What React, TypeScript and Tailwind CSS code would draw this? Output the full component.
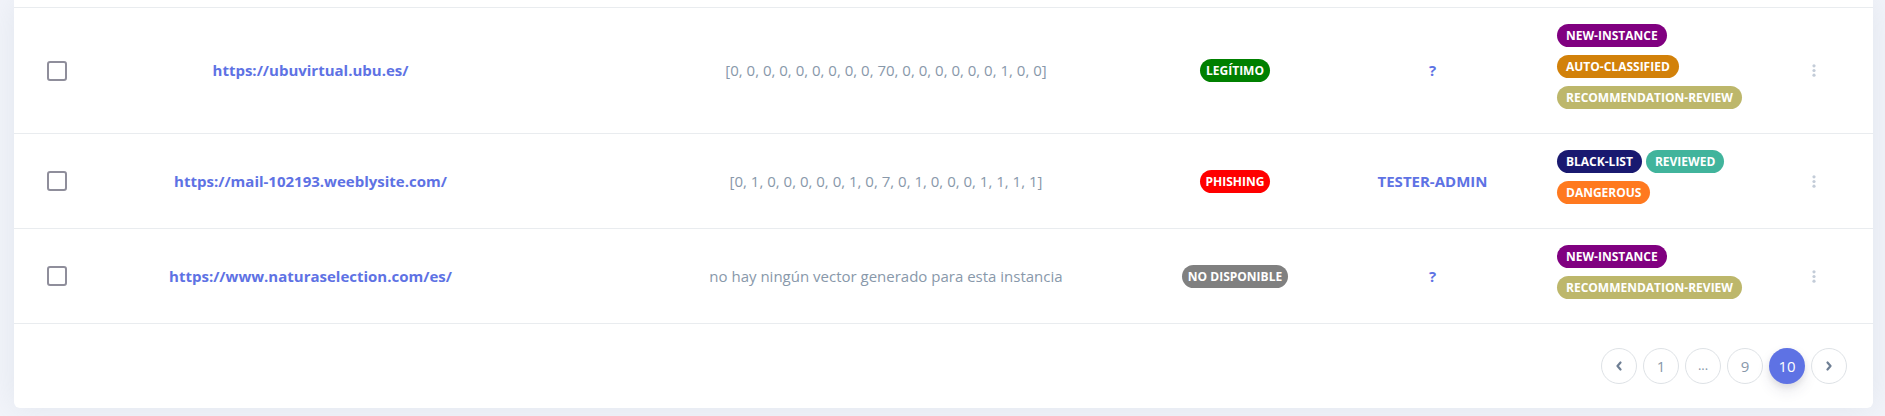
import React from 'react';

interface Tag {
  label: string;
  color: string;
}

interface Row {
  url: string;
  vector: string;
  status: { label: string; color: string };
  user: string;
  tags: Tag[];
}

const rows: Row[] = [
  {
    url: 'https://ubuvirtual.ubu.es/',
    vector: '[0, 0, 0, 0, 0, 0, 0, 0, 0, 70, 0, 0, 0, 0, 0, 0, 1, 0, 0]',
    status: { label: 'Legítimo', color: 'bg-[#008000]' },
    user: '?',
    tags: [
      { label: 'new-instance', color: 'bg-[#800080]' },
      { label: 'auto-classified', color: 'bg-[#d2810a]' },
      { label: 'recommendation-review', color: 'bg-[#bdb76b]' },
    ],
  },
  {
    url: 'https://mail-102193.weeblysite.com/',
    vector: '[0, 1, 0, 0, 0, 0, 0, 1, 0, 7, 0, 1, 0, 0, 0, 1, 1, 1, 1]',
    status: { label: 'Phishing', color: 'bg-[#ff0000]' },
    user: 'tester-admin',
    tags: [
      { label: 'black-list', color: 'bg-[#191970]' },
      { label: 'reviewed', color: 'bg-[#41b49c]' },
      { label: 'dangerous', color: 'bg-[#ff791f]' },
    ],
  },
  {
    url: 'https://www.naturaselection.com/es/',
    vector: 'no hay ningún vector generado para esta instancia',
    status: { label: 'No disponible', color: 'bg-[#808080]' },
    user: '?',
    tags: [
      { label: 'new-instance', color: 'bg-[#800080]' },
      { label: 'recommendation-review', color: 'bg-[#bdb76b]' },
    ],
  },
];

function Kebab() {
  return (
    <svg width="4" height="13" viewBox="0 0 4 13" fill="#c3ccd8">
      <circle cx="2" cy="1.8" r="1.6" />
      <circle cx="2" cy="6.5" r="1.6" />
      <circle cx="2" cy="11.2" r="1.6" />
    </svg>
  );
}

function Chevron({ dir }: { dir: 'left' | 'right' }) {
  return (
    <svg width="8" height="10" viewBox="0 0 8 10" fill="none" stroke="#6f7f94" strokeWidth="2.2" strokeLinecap="round" strokeLinejoin="round">
      {dir === 'left' ? <polyline points="5.5,1.5 2.5,5 5.5,8.5" /> : <polyline points="2.5,1.5 5.5,5 2.5,8.5" />}
    </svg>
  );
}

export default function App() {
  return (
    <div className="min-h-[416px] bg-[#f2f4fa] pl-[14px] pr-[12px] pb-[8px] font-['Open_Sans',sans-serif]">
      <div className="bg-white rounded-b-md shadow-[0_0_32px_0_rgba(136,152,170,0.15)]">
        <div className="h-[7px]" />

        {rows.map((r, i) => (
          <div key={i} className="flex items-center border-t border-[#e9ecef] py-4">
            <div className="w-[96px] pl-[33px]">
              <div className="w-5 h-5 border-2 border-[#8f8e9b] rounded-[3px]" />
            </div>
            <div className="w-[401px] text-center text-[15px] font-bold text-[#5e72e4]">{r.url}</div>
            <div className="w-[661px] pl-[89px] text-center text-[15px] text-[#8898aa]">{r.vector}</div>
            <div className="w-[136px] pr-[10px] flex justify-center">
              <span className={`${r.status.color} text-white uppercase font-bold text-[12px] leading-[15px] px-[6px] py-1 rounded-full`}>
                {r.status.label}
              </span>
            </div>
            <div className="w-[249px] text-center text-[15px] font-bold uppercase text-[#5e72e4]">{r.user}</div>
            <div className="w-[233px] flex flex-wrap">
              {r.tags.map((t, j) => (
                <span key={j} className={`${t.color} text-white uppercase font-bold text-[12px] leading-[15px] px-[9px] py-1 rounded-full mr-1 mb-2`}>
                  {t.label}
                </span>
              ))}
            </div>
            <div className="flex-1 pl-[22px] flex items-center">
              <Kebab />
            </div>
          </div>
        ))}

        <div className="border-t border-[#e9ecef] flex justify-end gap-[6px] pt-6 pb-6 pr-[26px]">
          <button className="w-9 h-9 rounded-full border border-[#dee2e6] flex items-center justify-center">
            <Chevron dir="left" />
          </button>
          <button className="w-9 h-9 rounded-full border border-[#dee2e6] flex items-center justify-center text-[15px] text-[#8898aa]">1</button>
          <button className="w-9 h-9 rounded-full border border-[#dee2e6] flex items-center justify-center text-[13px] text-[#8898aa]">...</button>
          <button className="w-9 h-9 rounded-full border border-[#dee2e6] flex items-center justify-center text-[15px] text-[#8898aa]">9</button>
          <button className="w-9 h-9 rounded-full bg-[#5e72e4] flex items-center justify-center text-[15px] text-white shadow-[0_7px_14px_rgba(50,50,93,0.1),0_3px_6px_rgba(0,0,0,0.08)]">10</button>
          <button className="w-9 h-9 rounded-full border border-[#dee2e6] flex items-center justify-center">
            <Chevron dir="right" />
          </button>
        </div>
      </div>
    </div>
  );
}
